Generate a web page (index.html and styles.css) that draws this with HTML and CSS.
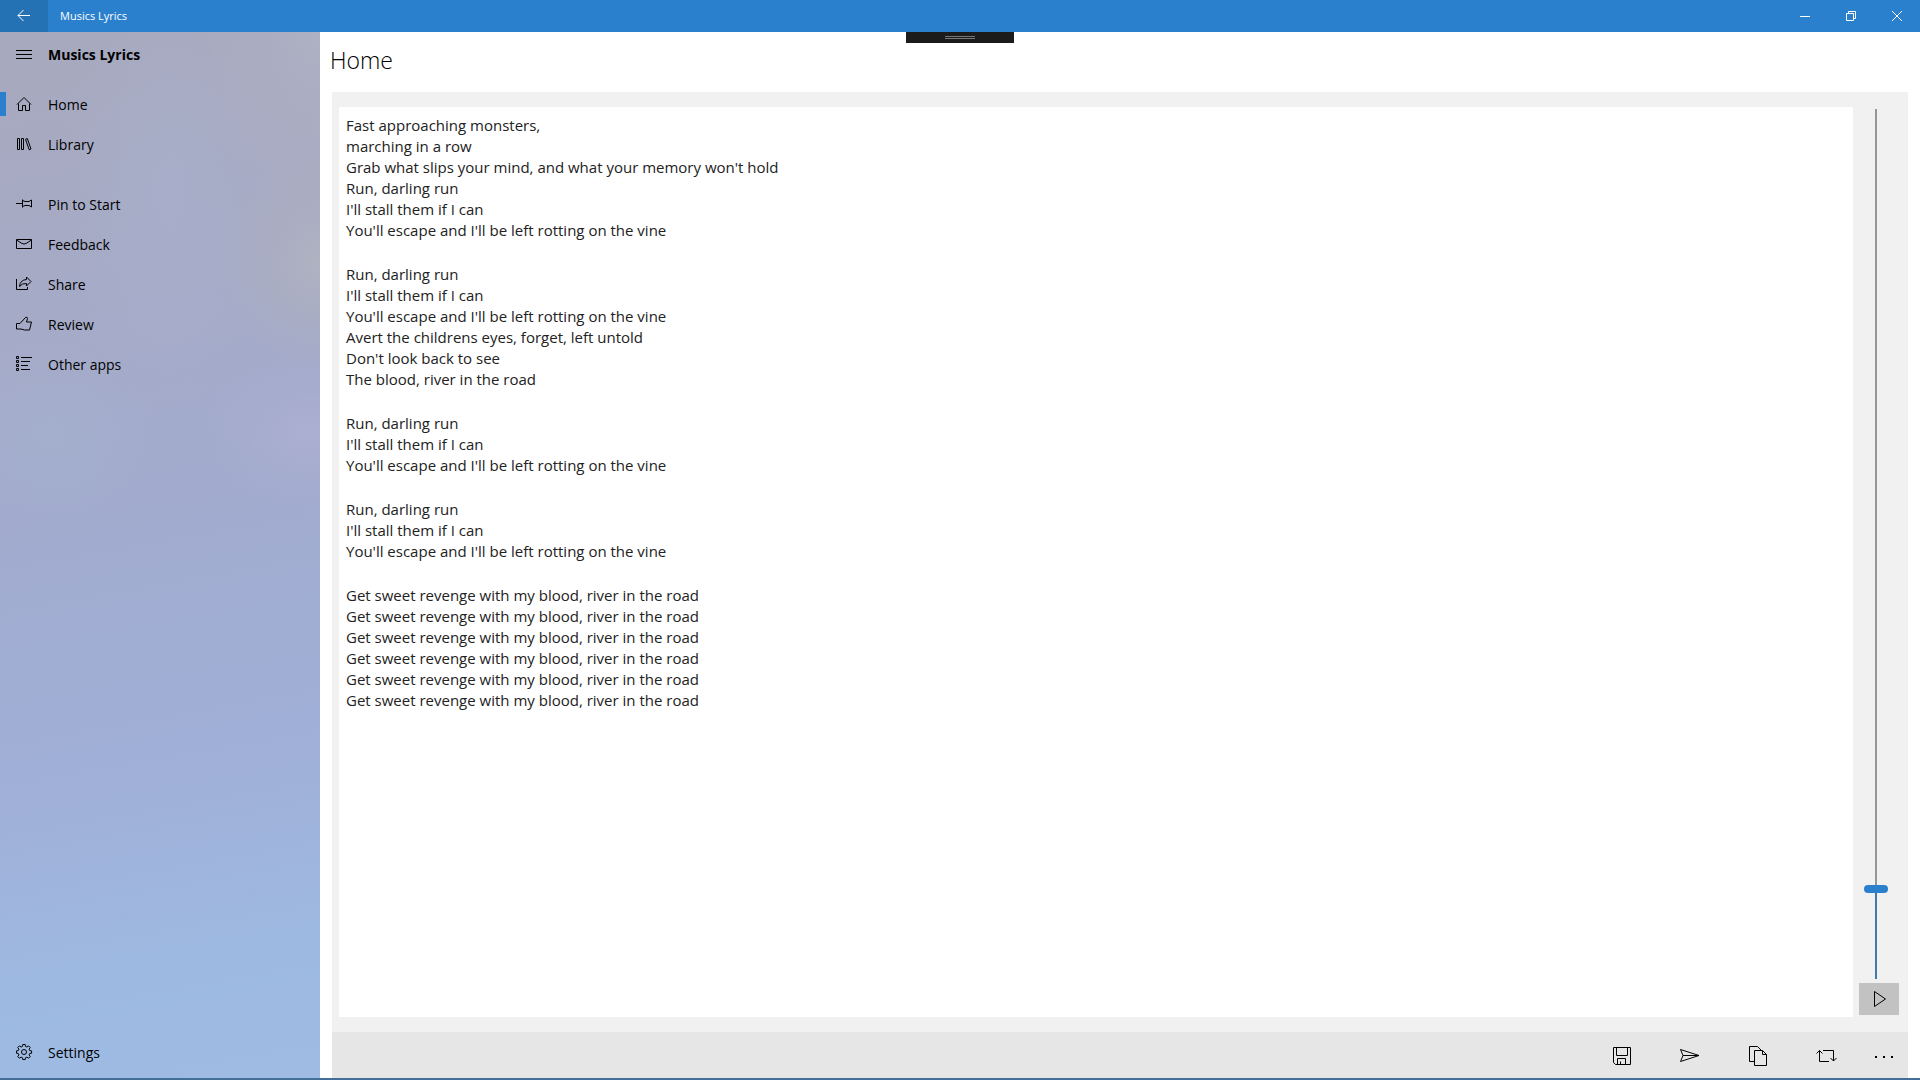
FILE: index.html
```html
<!DOCTYPE html>
<html lang="en">
<head>
<meta charset="utf-8">
<meta name="viewport" content="width=device-width, initial-scale=1">
<title>Musics Lyrics</title>
<link rel="stylesheet" href="styles.css">
</head>
<body>
<div class="app">
  <header class="titlebar">
    <button class="back" type="button" aria-label="Back">
      <svg class="icon" viewBox="0 0 16 16"><path d="M2 7.5h12M7.5 2 2 7.500 7.500 13"/></svg>
    </button>
    <span class="app-name">Musics Lyrics</span>
    <div class="window-controls">
      <button type="button" aria-label="Minimize"><svg class="icon" viewBox="0 0 16 16"><path d="M3 8.500h10"/></svg></button>
      <button type="button" aria-label="Restore"><svg class="icon" viewBox="0 0 16 16"><path d="M3.500 5.500h7v7h-7zM5.500 5.500v-2h7v7h-2"/></svg></button>
      <button type="button" aria-label="Close"><svg class="icon" viewBox="0 0 16 16"><path d="m3 3 10 10M13 3 3 13"/></svg></button>
    </div>
    <div class="grip"></div>
  </header>

  <div class="body">
    <nav class="sidebar">
      <div class="sidebar-head">
        <button class="menu" type="button" aria-label="Menu">
          <svg class="icon" viewBox="0 0 16 16"><path d="M0 4.500h16M0 8.500h16M0 12.500h16"/></svg>
        </button>
        <strong>Musics Lyrics</strong>
      </div>
      <ul class="nav-list">
        <li><a class="nav-item selected" href="#home"><svg class="icon" viewBox="0 0 16 16"><path d="M1 8.500 8 1.500l7 7M2.500 7.500v7h4v-5h3v5h4v-7"/></svg>Home</a></li>
        <li><a class="nav-item" href="#library"><svg class="icon" viewBox="0 0 16 16"><path d="M1.500 2.500h2v11h-2zM5.500 2.500h2v11h-2zM9.500 3.300l1.800-.8 3.700 10.500-1.800.8z"/></svg>Library</a></li>
      </ul>
      <ul class="nav-list">
        <li><a class="nav-item" href="#pin"><svg class="icon" viewBox="0 0 16 16"><path d="M0 7.500h6.500M6.500 3.500v8M6.500 4.500 9 5.500h4l2.500-1.500v7L13 9.500H9l-2.500 1"/></svg>Pin to Start</a></li>
        <li><a class="nav-item" href="#feedback"><svg class="icon" viewBox="0 0 16 16"><path d="M.5 3.500h15v9H.5zM.5 4l5.500 3.500q2 1 4 0L15.500 4"/></svg>Feedback</a></li>
        <li><a class="nav-item" href="#share"><svg class="icon" viewBox="0 0 16 16"><path d="M.5 3v10.500h11V11M10.500 1 15 5.500 10.500 10V7.500Q6 7 3.500 10.500 4 4 10.500 3.500z"/></svg>Share</a></li>
        <li><a class="nav-item" href="#review"><svg class="icon" viewBox="0 0 16 16"><path d="M.5 7.500h3.500L9.500 1.500q2-1 2 1L10.500 6h5L13.500 14H8.500L5 13H.5z"/></svg>Review</a></li>
        <li><a class="nav-item" href="#apps"><svg class="icon" viewBox="0 0 16 16"><path d="M.5.5h2v2h-2zM.5 4.500h2v2h-2zM.5 8.500h2v2h-2zM.5 12.500h2v2h-2zM5 1.500h11M5 5.500h9M5 9.500h7M5 13.500h9"/></svg>Other apps</a></li>
      </ul>
      <a class="nav-item settings" href="#settings"><svg class="icon" viewBox="0 0 16 16"><circle cx="8" cy="8" r="2.500"/><path d="M6.800.5h2.400l.4 2 1.300.5L12.600 1.900l1.600 1.600-1.100 1.700.5 1.300 2 .4v2.300l-2 .4-.5 1.300 1.100 1.700-1.600 1.600-1.700-1.100-1.300.5-.4 1.900H6.800l-.4-1.900L5.100 13.100l-1.700 1.100-1.600-1.600 1.100-1.700L2.400 9.600l-1.900-.4V6.900l1.900-.4.5-1.300L1.800 3.500l1.600-1.600L5.100 3l1.300-.5z"/></svg>Settings</a>
    </nav>

    <main class="main">
      <h1>Home</h1>
      <section class="panel">
        <article class="lyrics">
          <p>Fast approaching monsters,<br>marching in a row<br>Grab what slips your mind, and what your memory won't hold<br>Run, darling run<br>I'll stall them if I can<br>You'll escape and I'll be left rotting on the vine</p>
          <p>Run, darling run<br>I'll stall them if I can<br>You'll escape and I'll be left rotting on the vine<br>Avert the childrens eyes, forget, left untold<br>Don't look back to see<br>The blood, river in the road</p>
          <p>Run, darling run<br>I'll stall them if I can<br>You'll escape and I'll be left rotting on the vine</p>
          <p>Run, darling run<br>I'll stall them if I can<br>You'll escape and I'll be left rotting on the vine</p>
          <p>Get sweet revenge with my blood, river in the road<br>Get sweet revenge with my blood, river in the road<br>Get sweet revenge with my blood, river in the road<br>Get sweet revenge with my blood, river in the road<br>Get sweet revenge with my blood, river in the road<br>Get sweet revenge with my blood, river in the road</p>
        </article>
        <div class="player">
          <input class="speed" type="range" min="0" max="100" value="10" aria-label="Scroll speed">
          <button class="play" type="button" aria-label="Play"><svg class="icon" viewBox="0 0 16 16"><path d="M3.500 .5 14.500 8 3.500 15.500z"/></svg></button>
        </div>
      </section>
      <footer class="appbar">
        <button type="button" aria-label="Save"><svg class="icon" viewBox="0 0 20 20"><path d="M1.500 1.500h17v17H3.500l-2-2zM4.500 1.500v8h11v-8M5.500 18.500v-6h8v6M8.500 18.500v-3"/></svg></button>
        <button type="button" aria-label="Send"><svg class="icon" viewBox="0 0 20 20"><path d="M.5 3.500 19 9.500.500 15.500l2.500-6zM3 9.500h16"/></svg></button>
        <button type="button" aria-label="Copy"><svg class="icon" viewBox="0 0 20 20"><path d="M6.500 15.500h-5v-15h8l4 4M6.500 4.500h8l4 4v11h-12zM14.500 4.500v4h4"/></svg></button>
        <button type="button" aria-label="Repeat"><svg class="icon" viewBox="0 0 20 20"><path d="M7 4.500h10.500V15M13 15.500H3.500V4.500M.5 7.500l3-3 3 3M14.500 12l3 3 3-3"/></svg></button>
        <button class="more" type="button" aria-label="More"><svg class="icon" viewBox="0 0 20 20"><path d="M1 11h2M9 11h2M17 11h2"/></svg></button>
      </footer>
    </main>
  </div>
</div>
</body>
</html>
```
FILE: styles.css
```css
:root {
  --accent: #2a80cd;
}

* {
  box-sizing: border-box;
}

body {
  margin: 0;
  font-family: "Open Sans", "Noto Sans", sans-serif;
  font-size: 14px;
  color: #000;
  background: #fff;
}

button {
  display: flex;
  align-items: center;
  justify-content: center;
  padding: 0;
  border: 0;
  background: none;
  color: inherit;
}

.icon {
  width: 16px;
  height: 16px;
  fill: none;
  stroke: currentColor;
  stroke-width: 1;
  overflow: visible;
}

.app {
  display: flex;
  flex-direction: column;
  min-height: 100vh;
  border-bottom: 2px solid #436f97;
}

/* Title bar */
.titlebar {
  position: relative;
  display: flex;
  height: 32px;
  background: var(--accent);
  color: #fff;
}

.back {
  width: 48px;
  background: #2471b4;
}

.app-name {
  padding-left: 12px;
  font-size: 11px;
  line-height: 32px;
}

.window-controls {
  display: flex;
  margin-left: auto;
}

.window-controls button {
  width: 46px;
}

.grip {
  position: absolute;
  top: 100%;
  left: 50%;
  width: 108px;
  height: 11px;
  margin-left: -54px;
  background:
    linear-gradient(#777, #777) 50% 4px / 30px 1px no-repeat,
    linear-gradient(#777, #777) 50% 6px / 30px 1px no-repeat,
    #1b1b1b;
}

.body {
  display: flex;
  flex: 1;
}

/* Sidebar */
.sidebar {
  display: flex;
  flex-direction: column;
  width: 320px;
  padding-bottom: 6px;
  background:
    radial-gradient(ellipse 100px 110px at 320px 230px, rgba(178, 180, 190, .8), rgba(178, 180, 190, .3) 55%, rgba(178, 180, 190, 0)),
    radial-gradient(ellipse 110px 80px at 310px 400px, rgba(176, 178, 212, .7), rgba(176, 178, 212, .2) 60%, rgba(176, 178, 212, 0)),
    radial-gradient(ellipse 110px 90px at 50px 400px, rgba(165, 178, 206, .7), rgba(165, 178, 206, .2) 60%, rgba(165, 178, 206, 0)),
    radial-gradient(ellipse 110px 220px at 170px 160px, rgba(170, 178, 206, .6), rgba(170, 178, 206, .2) 60%, rgba(170, 178, 206, 0)),
    radial-gradient(ellipse 120px 200px at 320px 0, rgba(176, 179, 196, .8), rgba(176, 179, 196, 0)),
    linear-gradient(170deg, #a7a9bd 0%, #a5aac6 25%, #a1abcf 48%, #a0b0d8 70%, #9dbae2 90%, #9fbbe3 100%);
}

.sidebar-head {
  display: flex;
  align-items: center;
  height: 44px;
  margin-bottom: 8px;
}

.menu {
  width: 48px;
  height: 44px;
}

.nav-list {
  margin: 0 0 20px;
  padding: 0;
  list-style: none;
}

.nav-item {
  display: flex;
  align-items: center;
  gap: 16px;
  height: 40px;
  padding-left: 16px;
  color: inherit;
  text-decoration: none;
}

.selected {
  background: linear-gradient(var(--accent), var(--accent)) 0 50% / 6px 24px no-repeat;
}

.settings {
  margin-top: auto;
}

/* Content */
.main {
  display: flex;
  flex: 1;
  flex-direction: column;
  padding: 0 12px;
}

h1 {
  height: 60px;
  margin: 0 0 0 -2px;
  font-size: 23px;
  font-weight: 300;
  line-height: 56px;
}

.panel {
  display: grid;
  flex: 1;
  grid-template-columns: 1fr 40px;
  gap: 6px;
  padding: 15px 9px 15px 7px;
  background: #f1f1f1;
}

.lyrics {
  padding: 8px 7px;
  background: #fff;
  color: #222;
  font-size: 15px;
  line-height: 21px;
}

.lyrics p {
  margin: 0 0 23px;
}

.player {
  display: flex;
  flex-direction: column;
  gap: 4px;
  padding: 2px 0;
}

.speed {
  flex: 1;
  width: 24px;
  min-height: 0;
  margin: 0 0 0 5px;
  writing-mode: vertical-lr;
  direction: rtl;
  appearance: none;
  background: linear-gradient(to top, #3c7cb0 10%, #969696 10%) 50% 0 / 2px 100% no-repeat;
}

.speed::-webkit-slider-thumb {
  width: 24px;
  height: 8px;
  border-radius: 4px;
  appearance: none;
  background: var(--accent);
}

.play {
  width: 40px;
  height: 32px;
  background: #c2c2c2;
}

.appbar {
  display: flex;
  justify-content: flex-end;
  height: 46px;
  padding-top: 2px;
  background: #e6e6e6;
}

.appbar button {
  width: 68px;
}

.appbar .more {
  width: 48px;
}

.appbar .icon {
  width: 20px;
  height: 20px;
}

.appbar .more .icon {
  stroke-width: 2;
}
```
